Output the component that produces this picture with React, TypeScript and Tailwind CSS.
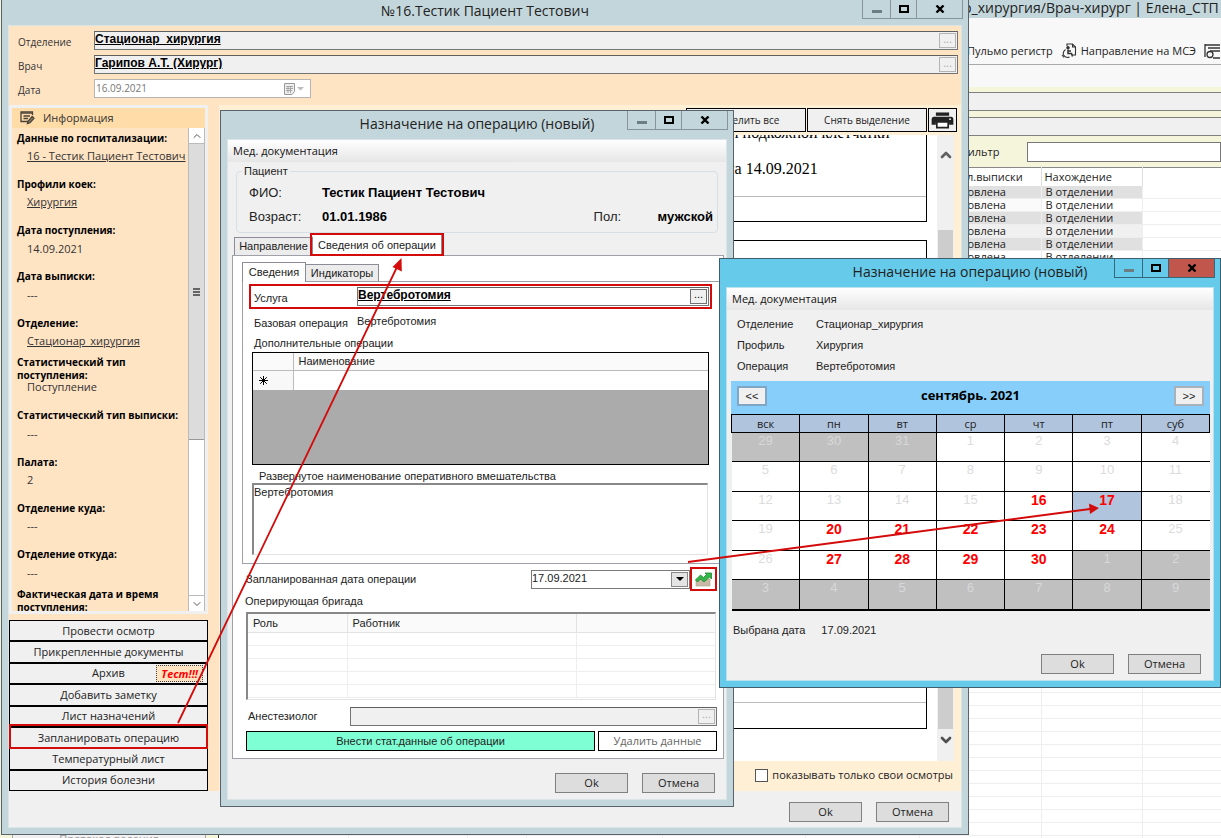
import React, { useState } from 'react';
import { ChevronDown, ChevronUp } from 'lucide-react';

const sans = "font-['Liberation_Sans',Arial,sans-serif]";
const ui = "font-['Open_Sans','Noto_Sans',sans-serif]";

const patientInfo = [
  { label: 'Данные по госпитализации:', value: '16 - Тестик Пациент Тестович', link: true },
  { label: 'Профили коек:', value: 'Хирургия', link: true },
  { label: 'Дата поступления:', value: '14.09.2021' },
  { label: 'Дата выписки:', value: '---' },
  { label: 'Отделение:', value: 'Стационар_хирургия', link: true },
  { label: 'Статистический тип поступления:', value: 'Поступление' },
  { label: 'Статистический тип выписки:', value: '---' },
  { label: 'Палата:', value: '2' },
  { label: 'Отделение куда:', value: '---' },
  { label: 'Отделение откуда:', value: '---' },
  { label: 'Фактическая дата и время поступления:' },
];

const actions = [
  'Провести осмотр',
  'Прикрепленные документы',
  'Архив',
  'Добавить заметку',
  'Лист назначений',
  'Запланировать операцию',
  'Температурный лист',
  'История болезни',
];

const weekDays = ['вск', 'пн', 'вт', 'ср', 'чт', 'пт', 'суб'];

// 29 августа 2021 - первая ячейка календаря
const weeks = Array.from({ length: 6 }, (_, w) =>
  Array.from({ length: 7 }, (_, d) => {
    const date = new Date(2021, 7, 29 + w * 7 + d);
    const day = date.getDate();
    const other = date.getMonth() !== 8;
    const free = !other && day >= 16 && d > 0 && d < 6;
    return { day, other, free };
  })
);

const WindowControls = ({ danger = false }: { danger?: boolean }) => (
  <div className={`flex h-[19px] border border-t-0 ${danger ? 'border-[#34697c]' : 'border-[#879499]'}`}>
    <button type="button" aria-label="Свернуть" className="flex w-[27px] items-center justify-center">
      <span className="mt-1 h-[3px] w-[10px] bg-[#6c7d83]" />
    </button>
    <button
      type="button"
      aria-label="Развернуть"
      className={`flex w-[27px] items-center justify-center border-x ${danger ? 'border-[#34697c]' : 'border-[#879499]'}`}
    >
      <span className="h-[8px] w-[10px] border-2 border-black" />
    </button>
    <button
      type="button"
      aria-label="Закрыть"
      className={`flex w-[45px] items-center justify-center ${danger ? 'bg-[#c1574c]' : ''}`}
    >
      <svg width="10" height="8" viewBox="0 0 10 8" fill="none" stroke="black" strokeWidth="2.4">
        <path d="M1.500 0.500L8.500 7.500M8.500 0.500L1.500 7.500" />
      </svg>
    </button>
  </div>
);

const DialogButton = ({ children }: { children: React.ReactNode }) => (
  <button type="button" className={`h-[20px] w-[73px] border border-[#808080] bg-[#ddd] text-[11px] leading-4 text-[#222] ${ui}`}>
    {children}
  </button>
);

const MenuBar = () => (
  <nav className={`flex h-[22px] items-center bg-gradient-to-b from-white to-[#e6e6e6] px-[5px] text-[11px] text-[#111] ${ui}`}>
    <button type="button">Мед. документация</button>
  </nav>
);

const LookupField = ({ id, value, muted = true }: { id: string; value: string; muted?: boolean }) => (
  <div className={`flex h-[19px] min-w-0 flex-1 items-start border border-[#747474] border-t-[#606060] pt-px pr-px ${muted ? 'bg-[#f0f0f0]' : 'bg-white'}`}>
    <input
      id={id}
      defaultValue={value}
      readOnly
      className={`h-[12px] min-w-0 flex-1 bg-transparent text-[12px] leading-3 font-bold text-black underline outline-none ${sans}`}
    />
    <button
      type="button"
      aria-label="Выбрать"
      className={`flex h-[15px] w-[17px] items-center justify-center border bg-[#f0f0f0] pb-1 text-[11px] leading-none ${muted ? 'border-[#b4b4b4] text-[#aaa]' : 'border-[#707070] text-black'}`}
    >
      ...
    </button>
  </div>
);

const NoteIcon = () => (
  <svg width="15" height="14" viewBox="0 0 15 14" fill="none" stroke="#4a4238" strokeWidth="1.3">
    <path d="M9 10.500H1V1H12.500V4" />
    <path d="M1 2.200H12.500M3.500 5H10M3.500 7.500H8" />
    <path d="M7.500 12.500L8.200 10L12.200 5.500L14 7.200L10 11.800Z" fill="#8a7f6f" />
  </svg>
);

const PrinterIcon = () => (
  <svg width="23" height="17" viewBox="0 0 24 18">
    <path d="M5 0.500H19V4H5Z" fill="#222" />
    <path d="M3 5H21Q23.500 5 23.500 8V13.500H19V10.500H5V13.500H0.500V8Q0.500 5 3 5Z" fill="#222" />
    <path d="M6 10.500H18V16.500H6Z" fill="white" stroke="#222" strokeWidth="1.8" />
    <circle cx="20" cy="7.600" r="1" fill="#eee" />
  </svg>
);

const ReferralIcon = () => (
  <svg width="16" height="16" viewBox="0 0 16 16" fill="none" stroke="#333" strokeWidth="1.1">
    <path d="M6 3V1H11.500L14.500 4V12H11" />
    <path d="M11.500 1V4H14.500" />
    <circle cx="7" cy="4.800" r="1.200" fill="#333" />
    <path d="M7 6.500V10.500H10.500L11.500 13.500M7 8H10" strokeWidth="1.5" />
    <path d="M4.500 6.500Q1.500 8.500 2.500 12Q4.500 15.500 8.500 14" />
    <path d="M1 12L3 14.500" />
  </svg>
);

const ChartIcon = () => (
  <svg width="17" height="15" viewBox="0 0 17 15">
    <path d="M1 7H15V14H1Z" fill="#c9b9a6" stroke="#ad9c88" strokeWidth="0.6" />
    <path d="M0.500 8L5.500 3L8.500 5.500L11.500 2.500L10 1H16.500V7L14.500 5L9 10L5.500 7L2.500 10Z" fill="#35b54a" stroke="#178a2b" strokeWidth="0.8" />
  </svg>
);

const statusShades = [
  ['bg-[#e0e0e0]', 'bg-[#e0e0e0]'],
  ['bg-[#fafafa]', 'bg-white'],
  ['bg-[#e0e0e0]', 'bg-[#e0e0e0]'],
  ['bg-[#f0f0f0]', 'bg-[#f0f0f0]'],
  ['bg-[#e0e0e0]', 'bg-[#e0e0e0]'],
  ['bg-white', 'bg-white'],
];

const BackgroundApp = () => (
  <div className={`flex h-screen w-full bg-white text-[11px] text-[#222] ${ui}`}>
    <div className="flex w-[219px] shrink-0 flex-col justify-end border-r border-[#333] bg-[#f5f5dc] px-[12px]">
      <button type="button" className="flex h-[5px] items-start justify-center overflow-hidden border-x border-[#aaa] bg-[#f0f0f0] text-[11px] leading-[11px] text-[#999]">
        Протокол ведения
      </button>
    </div>
    <div className="flex min-w-0 flex-1 flex-col overflow-hidden">
      <header className="h-[18px] shrink-0 bg-[#c3d6db] pl-[744px] text-[14px] leading-4 whitespace-nowrap">
        р_хирургия/Врач-хирург | Елена_СТП
      </header>
      <div className="flex h-[47px] shrink-0 items-end border-b border-[#aaa] bg-[#f8f8f8] pl-[748px]">
        <div className="flex h-[26px] items-center gap-2 whitespace-nowrap">
          <button type="button">Пульмо регистр</button>
          <button type="button" className="flex items-center gap-1">
            <ReferralIcon />
            Направление на МСЭ
          </button>
          <svg width="16" height="16" viewBox="0 0 16 16" fill="none" stroke="#333" strokeWidth="1.3">
            <path d="M1 1V14M1 2H16M4 5H16M6 8H16M9 15H16" />
            <circle cx="6" cy="11.500" r="3" />
          </svg>
        </div>
      </div>
      <div className="h-[22px] shrink-0 bg-[#f8f8f8]" />
      <div className="flex shrink-0 flex-col gap-[6px] bg-[#f5f5dc] py-[5px]">
        <div className="h-[19px] border-y border-[#808080] bg-[#f0f0f0]" />
        <div className="h-[19px] border-y border-[#808080] bg-[#f0f0f0]" />
        <div className="flex h-[20px] items-center pl-[740px]">
          <label htmlFor="filter" className="w-[68px]">Фильтр</label>
          <input id="filter" className="h-[20px] min-w-0 flex-1 border border-[#777] bg-white outline-none" />
        </div>
      </div>
      <table className="w-full table-fixed border-t border-[#888]">
        <colgroup>
          <col className="w-[129px]" />
          <col className="w-[119px]" />
          <col className="w-[59px]" />
          <col className="w-[136px]" />
          <col className="w-[143px]" />
          <col className="w-[114px]" />
          <col className="w-[122px]" />
          <col className="w-[101px]" />
          <col />
        </colgroup>
        <thead>
          <tr className="h-[18px] text-left">
            <td colSpan={6} />
            <th className="border-r border-[#ddd] pl-[48px] font-normal">л.выписки</th>
            <th className="border-r border-[#ddd] pl-[3px] font-normal">Нахождение</th>
            <td />
          </tr>
        </thead>
        <tbody>
          {Array.from({ length: 51 }, (_, i) => (
            <tr key={i} className="h-[13px] leading-3">
              {Array.from({ length: 6 }, (_, c) => (
                <td key={c} className="border-r border-b border-[#eee] p-0" />
              ))}
              <td className={`border-r border-b border-[#eee] p-0 pl-[48px] ${statusShades[i]?.[0] ?? ''}`}>
                {i < 6 && 'овлена'}
              </td>
              <td className={`border-r border-b border-[#eee] p-0 pl-[4px] ${statusShades[i]?.[1] ?? ''}`}>
                {i < 6 && 'В отделении'}
              </td>
              <td className="border-b border-[#eee] p-0" />
            </tr>
          ))}
        </tbody>
      </table>
    </div>
  </div>
);

const Sidebar = () => (
  <aside className="flex w-[199px] shrink-0 flex-col">
    <div className="flex flex-col border-[3px] border-[#f0f0f0] bg-[#ffe4c4]">
      <div className="flex h-[20px] items-center gap-[8px] bg-[#ffdca8] pl-[8px] text-[11px] text-[#333]">
        <NoteIcon />
        Информация
      </div>
      <div className="flex h-[483px]">
        <dl className="flex min-w-0 flex-1 flex-col justify-between overflow-hidden pl-[5px]">
          {patientInfo.map(item => (
            <div key={item.label}>
              <dt className="flex h-[20px] items-center text-[10px] leading-[13px] font-bold text-black">
                <span className="w-[165px]">{item.label}</span>
              </dt>
              {item.value && (
                <dd className="h-[16px] pl-[10px] text-[11px] leading-4 whitespace-nowrap text-[#333]">
                  {item.link ? <a href="#" className="underline">{item.value}</a> : item.value}
                </dd>
              )}
            </div>
          ))}
        </dl>
        <div className="flex w-[17px] shrink-0 flex-col border-x border-[#bbb] bg-white">
          <button type="button" aria-label="Вверх" className="flex h-[16px] items-center justify-center border-b border-[#bbb]">
            <ChevronUp size={12} color="#555" />
          </button>
          <div className="flex h-[296px] flex-col items-center justify-center gap-px border-b border-[#999] bg-[#dcdcdc]">
            <span className="h-[2px] w-[7px] bg-[#666]" />
            <span className="h-[2px] w-[7px] bg-[#666]" />
            <span className="h-[2px] w-[7px] bg-[#666]" />
          </div>
          <div className="flex-1" />
          <button type="button" aria-label="Вниз" className="flex h-[16px] items-center justify-center border-t border-[#bbb]">
            <ChevronDown size={12} color="#555" />
          </button>
        </div>
      </div>
    </div>
    <div className="mt-[6px] flex h-[171px] flex-col divide-y-2 divide-black border border-black bg-[#f0f0f0] text-[11px] text-[#222]">
      {actions.map(name => (
        <button key={name} type="button" className="relative min-h-0 flex-1 leading-4">
          {name}
          {name === 'Архив' && (
            <span className="absolute top-px right-1 h-[17px] border border-dotted border-[#444] bg-[#ffe4c4] px-1 text-[11px] leading-[15px] font-bold text-[#f00] italic">
              Тест!!!
            </span>
          )}
          {name === 'Запланировать операцию' && (
            <span className="absolute -inset-x-px -top-[4px] -bottom-[2px] border-2 border-[#d40b0b]" />
          )}
        </button>
      ))}
    </div>
  </aside>
);

const PatientWindow = () => (
  <section className={`absolute top-0 left-px flex w-[968px] flex-col border border-t-0 border-[#59636b] bg-[#c3d6db] px-[6px] pb-[6px] ${ui}`}>
    <div className="relative flex h-[25px] items-center justify-center pb-1">
      <h1 className="text-[14px] leading-5 text-[#222]">№16.Тестик Пациент Тестович</h1>
      <div className="absolute top-0 -right-px">
        <WindowControls />
      </div>
    </div>
    <div className="border border-[#dbe5e8] bg-[#f0f0f0]">
      <div className="flex flex-col gap-[5px] bg-[#ffe4c4] pt-[5px] pr-[3px] pb-[7px] pl-[9px] text-[10px] text-[#333]">
        <div className="flex items-center">
          <label htmlFor="department" className="w-[76px] pt-1">Отделение</label>
          <LookupField id="department" value="Стационар_хирургия" />
        </div>
        <div className="flex items-center">
          <label htmlFor="doctor" className="w-[76px] pt-1">Врач</label>
          <LookupField id="doctor" value="Гарипов А.Т. (Хирург)" />
        </div>
        <div className="flex items-center">
          <label htmlFor="date" className="w-[76px] pt-1">Дата</label>
          <div className="flex h-[19px] w-[217px] items-center border border-[#b5b5b5] bg-white pr-[5px]">
            <input id="date" defaultValue="16.09.2021" disabled className="min-w-0 flex-1 pl-px text-[10px] text-[#777]" />
            <svg width="21" height="12" viewBox="0 0 21 12" fill="none" stroke="#999">
              <path d="M0.500 0.500H10.500V8.500L8 11.500H0.500Z" fill="#eee" />
              <path d="M2 3.500H9M2 5.500H9M2 7.500H8M4 3V10M6.500 3V10" strokeWidth="0.8" />
              <path d="M13 4H20L16.500 7.500Z" fill="#bbb" stroke="none" />
            </svg>
          </div>
        </div>
      </div>
      <div className="flex bg-[#ffe4c4]">
        <Sidebar />
        <div className="ml-[11px] flex min-w-0 flex-1 flex-col bg-[#ffefd5] pt-[3px]">
          <div className="flex justify-end gap-px pr-[4px] text-[10px] text-[#222]">
            <button type="button" className="h-[24px] w-[120px] border border-black bg-[#f0f0f0]">Выделить все</button>
            <button type="button" className="h-[24px] w-[120px] border border-black bg-[#f0f0f0]">Снять выделение</button>
            <button type="button" aria-label="Печать" className="flex h-[24px] w-[29px] items-center justify-center border border-black bg-[#f0f0f0]">
              <PrinterIcon />
            </button>
          </div>
          <div className="mt-[3px] mr-[7px] ml-2 flex h-[626px] bg-white">
            <div className="flex min-w-0 flex-1 flex-col justify-between pr-[10px] pb-[32px]">
              <div className="flex flex-col font-['Liberation_Serif','Times_New_Roman',serif] text-[16px] text-black">
                <div className="flex h-[87px] flex-col overflow-hidden border-r border-b border-black">
                  <p className="-mt-3 h-[38px] pl-[503px] leading-5 whitespace-nowrap">и подкожной клетчатки</p>
                  <p className="h-[35px] pl-[499px] leading-4">на 14.09.2021</p>
                  <div className="border-t border-[#bbb]" />
                </div>
                <div className="mt-[18px] h-[60px] border-t border-r border-black" />
              </div>
              <div className="flex h-[130px] flex-col justify-end border-r border-b border-black">
                <div className="h-[26px] border-t border-[#bbb]" />
              </div>
            </div>
            <div className="flex w-[17px] flex-col items-center bg-[#f0f0f0] py-3">
              <ChevronUp size={16} strokeWidth={4} color="#606060" className="shrink-0" />
              <div className="mt-[67px] h-[499px] w-[15px] bg-[#cdcdcd]" />
              <ChevronDown size={16} strokeWidth={4} color="#505050" className="mt-[3px] shrink-0" />
            </div>
          </div>
          <div className="flex h-[28px] items-center justify-end pr-[8px]">
            <label className="flex items-center gap-1 text-[11px] text-[#222]">
              <input type="checkbox" className="h-[13px] w-[13px] appearance-none border border-[#555] bg-white" />
              показывать только свои осмотры
            </label>
          </div>
        </div>
      </div>
      <div className="flex h-[36px] justify-end gap-[14px] pt-[11px] pr-[12px]">
        <DialogButton>Ok</DialogButton>
        <DialogButton>Отмена</DialogButton>
      </div>
    </div>
  </section>
);

const OperationDialog = () => (
  <section className={`absolute top-[110px] left-[220px] flex w-[514px] flex-col border border-[#59636b] bg-[#c3d6db] px-[6px] pb-[6px] text-[11px] text-[#222] ${sans}`}>
    <div className="relative flex h-[28px] items-center justify-center pb-[2px]">
      <h2 className={`text-[14px] leading-5 ${ui}`}>Назначение на операцию (новый)</h2>
      <div className="absolute top-0 -right-px">
        <WindowControls />
      </div>
    </div>
    <div className="border border-[#dbe5e8] bg-[#f0f0f0]">
      <MenuBar />
      <fieldset className="mx-[8px] mt-px h-[70px] rounded-sm border border-[#d5dfe5] px-[12px] pt-[2px] text-[13px]">
        <legend className="-ml-[7px] px-[2px] text-[11px] leading-4">Пациент</legend>
        <div className="flex h-[24px] items-center">
          <span className="w-[73px]">ФИО:</span>
          <b className="text-black">Тестик Пациент Тестович</b>
        </div>
        <div className="flex h-[24px] items-center">
          <span className="w-[73px]">Возраст:</span>
          <b className="flex-1 text-black">01.01.1986</b>
          <span className="w-[64px]">Пол:</span>
          <b className="-mr-2 text-black">мужской</b>
        </div>
      </fieldset>
      <div role="tablist" className="mt-[2px] flex items-end pl-[6px]">
        <button type="button" role="tab" className="h-[18px] w-[79px] border border-b-0 border-[#8c8c96] bg-[#ececec]">
          Направление
        </button>
        <button type="button" role="tab" aria-selected className="relative h-[20px] w-[129px] border-r border-[#8c8c96] bg-white">
          Сведения об операции
          <span className="absolute -inset-x-[3px] -top-[2px] -bottom-px border-2 border-[#d40b0b]" />
        </button>
      </div>
      <div className="mr-[2px] ml-[4px] border border-[#a0a0aa] bg-white pt-[6px] pr-[3px] pb-[7px] pl-[9px]">
        <div role="tablist" className="flex items-end">
          <button type="button" role="tab" aria-selected className="-mb-px h-[20px] w-[64px] border border-b-0 border-[#8c8c96] bg-white">
            Сведения
          </button>
          <button type="button" role="tab" className="h-[17px] w-[73px] border border-b-0 border-l-0 border-[#8c8c96] bg-[#ececec]">
            Индикаторы
          </button>
        </div>
        <div className="border border-[#a0a0aa] pt-[2px] pr-[7px] pb-[8px] pl-[6px]">
          <div className="flex h-[25px] items-center border-2 border-[#d40b0b] pr-px pl-[3px]">
            <label htmlFor="service" className="w-[103px] pt-1">Услуга</label>
            <LookupField id="service" value="Вертебротомия" muted={false} />
          </div>
          <div className="flex h-[25px] items-center pl-[5px]">
            <span className="w-[103px] pt-[3px]">Базовая операция</span>
            <span>Вертебротомия</span>
          </div>
          <div className="flex h-[18px] items-center pl-[5px]">Дополнительные операции</div>
          <div className="mr-[3px] ml-[3px] h-[113px] border border-black bg-[#ababab]">
            <table className="w-full table-fixed">
              <thead>
                <tr className="h-[17px] bg-[#fafafa] text-left">
                  <th className="w-[40px] border-r border-b border-[#bbb]" />
                  <th className="border-b border-[#bbb] p-0 pl-[5px] leading-4 font-normal">Наименование</th>
                </tr>
              </thead>
              <tbody>
                <tr className="h-[20px]">
                  <td className="border-r border-[#bbb] bg-[#f8f8f8] p-0 pl-[6px]">
                    <svg width="9" height="9" viewBox="0 0 9 9" stroke="black">
                      <path d="M4.500 0V9M0 4.500H9M1.200 1.200L7.800 7.800M7.800 1.200L1.200 7.800" />
                    </svg>
                  </td>
                  <td className="bg-white" />
                </tr>
              </tbody>
            </table>
          </div>
          <label htmlFor="full-name" className="flex h-[18px] items-center pt-1 pl-[10px]">
            Развернутое наименование оперативного вмешательства
          </label>
          <textarea
            id="full-name"
            defaultValue="Вертебротомия"
            className="ml-[3px] block h-[72px] w-[456px] resize-none border-t-2 border-r border-b border-l-2 border-[#e3e3e3] border-t-[#888] border-l-[#888] bg-white leading-[14px] outline-none"
          />
        </div>
        <div className="mt-[3px] flex h-[24px] items-center pr-[3px] pl-[4px]">
          <label htmlFor="plan-date" className="w-[285px]">Запланированная дата операции</label>
          <div className="relative flex-1">
            <select id="plan-date" className="block h-[19px] w-full appearance-none border border-[#7a7a7a] bg-white pb-[3px] text-[11px] leading-[14px] text-[#222]">
              <option>17.09.2021</option>
            </select>
            <span className="pointer-events-none absolute top-[2px] right-[2px] flex h-[15px] w-[17px] items-center justify-center border border-[#888] bg-[#e4e4e4]">
              <svg width="8" height="4" viewBox="0 0 8 4"><path d="M0 0H8L4 4Z" /></svg>
            </span>
          </div>
          <button type="button" aria-label="Календарь операций" className="flex h-[24px] w-[27px] items-center justify-center border-2 border-[#d40b0b]">
            <ChartIcon />
          </button>
        </div>
        <div className="flex h-[21px] items-center pl-[3px]">Оперирующая бригада</div>
        <div className="mr-[4px] ml-[4px] h-[88px] border-t-2 border-r border-b border-l-2 border-[#e3e3e3] border-t-[#888] border-l-[#888]">
          <table className="w-full table-fixed">
            <colgroup>
              <col className="w-[99px]" />
              <col className="w-[229px]" />
              <col />
            </colgroup>
            <thead>
              <tr className="h-[18px] bg-[#fafafa] text-left">
                <th className="border-r border-b border-[#e3e3e3] p-0 pl-[5px] leading-4 font-normal">Роль</th>
                <th className="border-r border-b border-[#e3e3e3] p-0 pl-[5px] leading-4 font-normal">Работник</th>
                <th className="border-b border-[#e3e3e3]" />
              </tr>
            </thead>
            <tbody>
              {Array.from({ length: 5 }, (_, i) => (
                <tr key={i} className="h-[13px]">
                  <td className="border-r border-b border-[#eee] p-0" />
                  <td className="border-r border-b border-[#eee] p-0" />
                  <td className="border-b border-[#eee] p-0" />
                </tr>
              ))}
            </tbody>
          </table>
        </div>
        <div className="mt-[7px] flex items-center pr-[3px] pl-[6px]">
          <label htmlFor="anesthetist" className="w-[102px]">Анестезиолог</label>
          <LookupField id="anesthetist" value="" />
        </div>
        <div className="mt-[5px] flex gap-[3px] pr-[3px] pl-[4px]">
          <button type="button" className="h-[20px] flex-1 border border-black bg-[#7fffd4] leading-4">
            Внести стат.данные об операции
          </button>
          <button type="button" className={`h-[20px] w-[119px] border border-black bg-white leading-4 text-[#666] ${ui}`}>
            Удалить данные
          </button>
        </div>
      </div>
      <div className="flex h-[40px] justify-end gap-[14px] pt-[14px] pr-[11px]">
        <DialogButton>Ok</DialogButton>
        <DialogButton>Отмена</DialogButton>
      </div>
    </div>
  </section>
);

const CalendarDialog = () => {
  const [selected, setSelected] = useState(17);

  return (
    <section className={`absolute top-[258px] left-[719px] flex w-[502px] flex-col border border-[#3f5d6a] bg-[#66caea] px-[6px] pb-[6px] text-[11px] text-[#222] ${sans}`}>
      <div className="relative flex h-[28px] items-center justify-center pb-[2px]">
        <h2 className={`text-[14px] leading-5 ${ui}`}>Назначение на операцию (новый)</h2>
        <div className="absolute top-0 -right-px">
          <WindowControls danger />
        </div>
      </div>
      <div className="border border-[#b9e2f0] bg-[#f0f0f0]">
        <MenuBar />
        <dl className="grid grid-cols-[79px_1fr] py-[4px] pl-[10px] leading-[21px]">
          <dt>Отделение</dt>
          <dd>Стационар_хирургия</dd>
          <dt>Профиль</dt>
          <dd>Хирургия</dd>
          <dt>Операция</dt>
          <dd>Вертебротомия</dd>
        </dl>
        <div className="mr-[3px] ml-[4px]">
          <div className="flex h-[33px] items-center justify-between bg-[#87cefa] px-[6px] pb-1">
            <button type="button" className="h-[20px] w-[30px] border-2 border-[#7fa6c4] bg-[#f0f0f0] leading-3">&lt;&lt;</button>
            <b className={`text-[13px] text-black ${ui}`}>сентябрь. 2021</b>
            <button type="button" className="h-[20px] w-[30px] border-2 border-[#a8b2bc] bg-[#f0f0f0] leading-3">&gt;&gt;</button>
          </div>
          <table className="h-[197px] w-full table-fixed border-collapse border-b-2 border-black text-center">
            <thead>
              <tr className="h-[18px] bg-[#b0c4de]">
                {weekDays.map(day => (
                  <th key={day} className={`border border-black p-0 leading-4 font-normal ${ui}`}>{day}</th>
                ))}
              </tr>
            </thead>
            <tbody>
              {weeks.map((week, w) => (
                <tr key={w} className="align-top text-[13px] leading-4">
                  {week.map(({ day, other, free }, d) => (
                    <td
                      key={d}
                      className={`border border-black p-0 first:border-l-0 last:border-r-0 ${other ? 'bg-[#c0c0c0] text-[#d8d8d8]' : free && day === selected ? 'bg-[#b0c4de]' : 'bg-white text-[#dcdcdc]'}`}
                    >
                      {free ? (
                        <button type="button" onClick={() => setSelected(day)} className="block w-full text-[14px] leading-4 font-bold text-[#f00]">
                          {day}
                        </button>
                      ) : day}
                    </td>
                  ))}
                </tr>
              ))}
            </tbody>
          </table>
        </div>
        <div className="flex h-[38px] items-center gap-4 pl-[6px]">
          <span>Выбрана дата</span>
          <span>{selected}.09.2021</span>
        </div>
        <div className="flex h-[31px] justify-end gap-[14px] pt-[5px] pr-[12px]">
          <DialogButton>Ok</DialogButton>
          <DialogButton>Отмена</DialogButton>
        </div>
      </div>
    </section>
  );
};

// Стрелки с подсказками поверх окон
const Hints = () => (
  <svg className="pointer-events-none absolute top-0 left-0" width="1221" height="838" fill="none" stroke="#d40b0b" strokeWidth="1.8">
    <path d="M178 723L397 267M688 562L1090 509" />
    <path d="M401.500 258L401.800 271.500L392.500 267Z" fill="#d40b0b" stroke="none" />
    <path d="M1099 508L1090 514L1089 503.500Z" fill="#d40b0b" stroke="none" />
  </svg>
);

const App = () => (
  <main className="relative h-screen w-full overflow-hidden">
    <BackgroundApp />
    <PatientWindow />
    <OperationDialog />
    <CalendarDialog />
    <Hints />
  </main>
);

export default App;
